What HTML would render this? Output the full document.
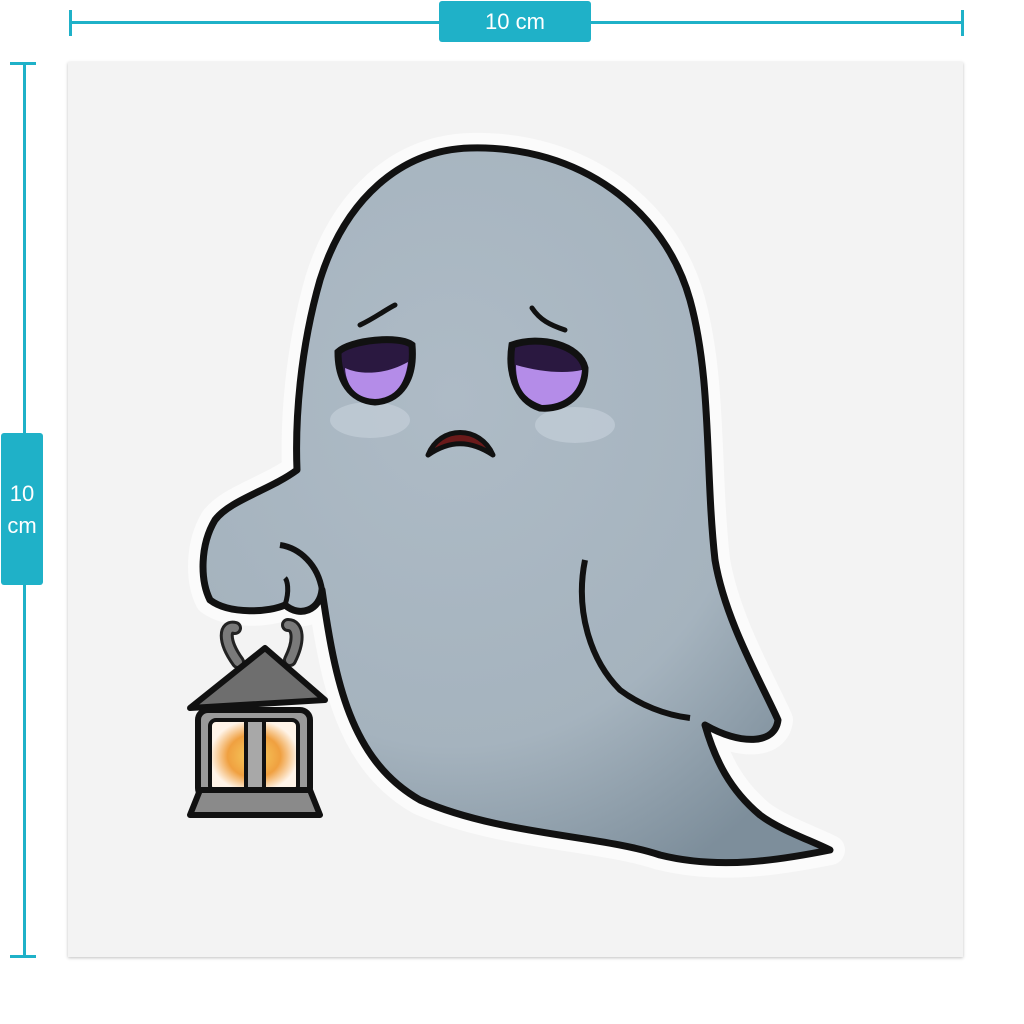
<!DOCTYPE html>
<html><head><style>
body{margin:0;width:1024px;height:1024px;background:#fff;position:relative;overflow:hidden;font-family:"Liberation Sans",sans-serif}
.lab{position:absolute;background:#1fb1c8;color:#fff;border-radius:3px;text-align:center;font-size:22px}
</style></head><body>
<div style="position:absolute;left:68px;top:62px;width:895px;height:895px;background:#f3f3f3;box-shadow:0 1px 3px rgba(0,0,0,.25)"></div>
<div style="position:absolute;left:70px;top:21px;width:893px;height:3px;background:#1fb1c8"></div>
<div style="position:absolute;left:69px;top:10px;width:3px;height:26px;background:#1fb1c8"></div>
<div style="position:absolute;left:961px;top:10px;width:3px;height:26px;background:#1fb1c8"></div>
<div class="lab" style="left:439px;top:1px;width:152px;height:41px;line-height:41px">10 cm</div>
<div style="position:absolute;left:23px;top:63px;width:3px;height:894px;background:#1fb1c8"></div>
<div style="position:absolute;left:10px;top:62px;width:26px;height:3px;background:#1fb1c8"></div>
<div style="position:absolute;left:10px;top:955px;width:26px;height:3px;background:#1fb1c8"></div>
<div class="lab" style="left:1px;top:433px;width:42px;height:152px;padding-top:45px;box-sizing:border-box;line-height:32px">10<br>cm</div>
<svg width="1024" height="1024" style="position:absolute;left:0;top:0">
<defs>
<radialGradient id="g" cx="0.4" cy="0.35" r="0.75"><stop offset="0" stop-color="#aebbc6"/><stop offset="0.65" stop-color="#a5b3be"/><stop offset="1" stop-color="#7d8e9b"/></radialGradient>
<radialGradient id="f" cx="0.5" cy="0.5" r="0.5"><stop offset="0" stop-color="#f6d060"/><stop offset="0.6" stop-color="#f0a040"/><stop offset="1" stop-color="#fff4e8"/></radialGradient>
</defs>
<path id="body" d="M 470 148 C 400 150 345 200 320 280 C 300 350 295 420 297 470 C 270 490 230 500 215 520 C 200 545 200 580 210 600 C 230 615 270 612 285 605 C 300 618 320 610 322 590 C 335 680 350 760 420 800 C 500 835 600 835 660 855 C 720 870 780 860 830 850 C 810 840 780 830 760 815 C 730 790 715 760 705 725 C 740 745 775 745 778 720 C 760 680 725 620 715 560 C 705 470 712 380 690 300 C 665 210 580 145 470 148 Z" fill="none" stroke="#fbfbfb" stroke-width="30" stroke-linejoin="round"/>
<path d="M 470 148 C 400 150 345 200 320 280 C 300 350 295 420 297 470 C 270 490 230 500 215 520 C 200 545 200 580 210 600 C 230 615 270 612 285 605 C 300 618 320 610 322 590 C 335 680 350 760 420 800 C 500 835 600 835 660 855 C 720 870 780 860 830 850 C 810 840 780 830 760 815 C 730 790 715 760 705 725 C 740 745 775 745 778 720 C 760 680 725 620 715 560 C 705 470 712 380 690 300 C 665 210 580 145 470 148 Z" fill="url(#g)" stroke="#111" stroke-width="7" stroke-linejoin="round"/>
<path d="M 280 545 C 300 548 318 565 322 590" fill="none" stroke="#111" stroke-width="6"/>
<path d="M 285 605 C 290 590 287 580 285 578" fill="none" stroke="#111" stroke-width="5"/>
<path d="M 585 560 C 575 610 590 660 620 690 C 640 705 665 715 690 718" fill="none" stroke="#111" stroke-width="6"/>
<ellipse cx="370" cy="420" rx="40" ry="18" fill="#c8d2dc" opacity=".6"/>
<ellipse cx="575" cy="425" rx="40" ry="18" fill="#c8d2dc" opacity=".6"/>
<path d="M 338 352 C 350 340 400 335 412 345 C 415 380 400 400 375 402 C 350 400 338 380 338 352 Z" fill="#2a1840" stroke="#111" stroke-width="7"/>
<path d="M 345 368 C 360 375 385 375 408 362 C 405 385 395 398 375 399 C 355 398 346 385 345 368 Z" fill="#b48ce8"/>
<path d="M 512 345 C 540 335 580 345 585 368 C 585 395 565 410 540 408 C 515 400 508 370 512 345 Z" fill="#2a1840" stroke="#111" stroke-width="7"/>
<path d="M 516 365 C 540 372 565 374 582 370 C 580 395 562 405 542 405 C 522 398 516 385 516 365 Z" fill="#b48ce8"/>
<path d="M 360 325 C 375 318 385 310 395 305" fill="none" stroke="#111" stroke-width="5" stroke-linecap="round"/>
<path d="M 532 308 C 540 320 550 325 565 330" fill="none" stroke="#111" stroke-width="5" stroke-linecap="round"/>
<path d="M 428 455 C 440 425 480 425 493 455 C 470 440 450 440 428 455 Z" fill="#6a1a1a" stroke="#111" stroke-width="5" stroke-linejoin="round"/>
<path d="M 238 662 C 222 640 225 625 235 628 M 290 660 C 300 640 298 625 288 625" fill="none" stroke="#222" stroke-width="14" stroke-linecap="round"/>
<path d="M 238 662 C 222 640 225 625 235 628 M 290 660 C 300 640 298 625 288 625" fill="none" stroke="#7a7a7a" stroke-width="8" stroke-linecap="round"/>
<path d="M 265 648 L 325 700 L 190 708 Z" fill="#6e6e6e" stroke="#111" stroke-width="6" stroke-linejoin="round"/>
<rect x="198" y="710" width="112" height="88" rx="10" fill="#9a9a9a" stroke="#111" stroke-width="6"/>
<rect x="210" y="720" width="88" height="72" rx="6" fill="url(#f)" stroke="#111" stroke-width="4"/>
<rect x="246" y="720" width="18" height="72" fill="#a8a8a8" stroke="#111" stroke-width="4"/>
<path d="M 200 790 L 310 790 L 320 815 L 190 815 Z" fill="#8a8a8a" stroke="#111" stroke-width="6" stroke-linejoin="round"/>
</svg>
</body></html>
